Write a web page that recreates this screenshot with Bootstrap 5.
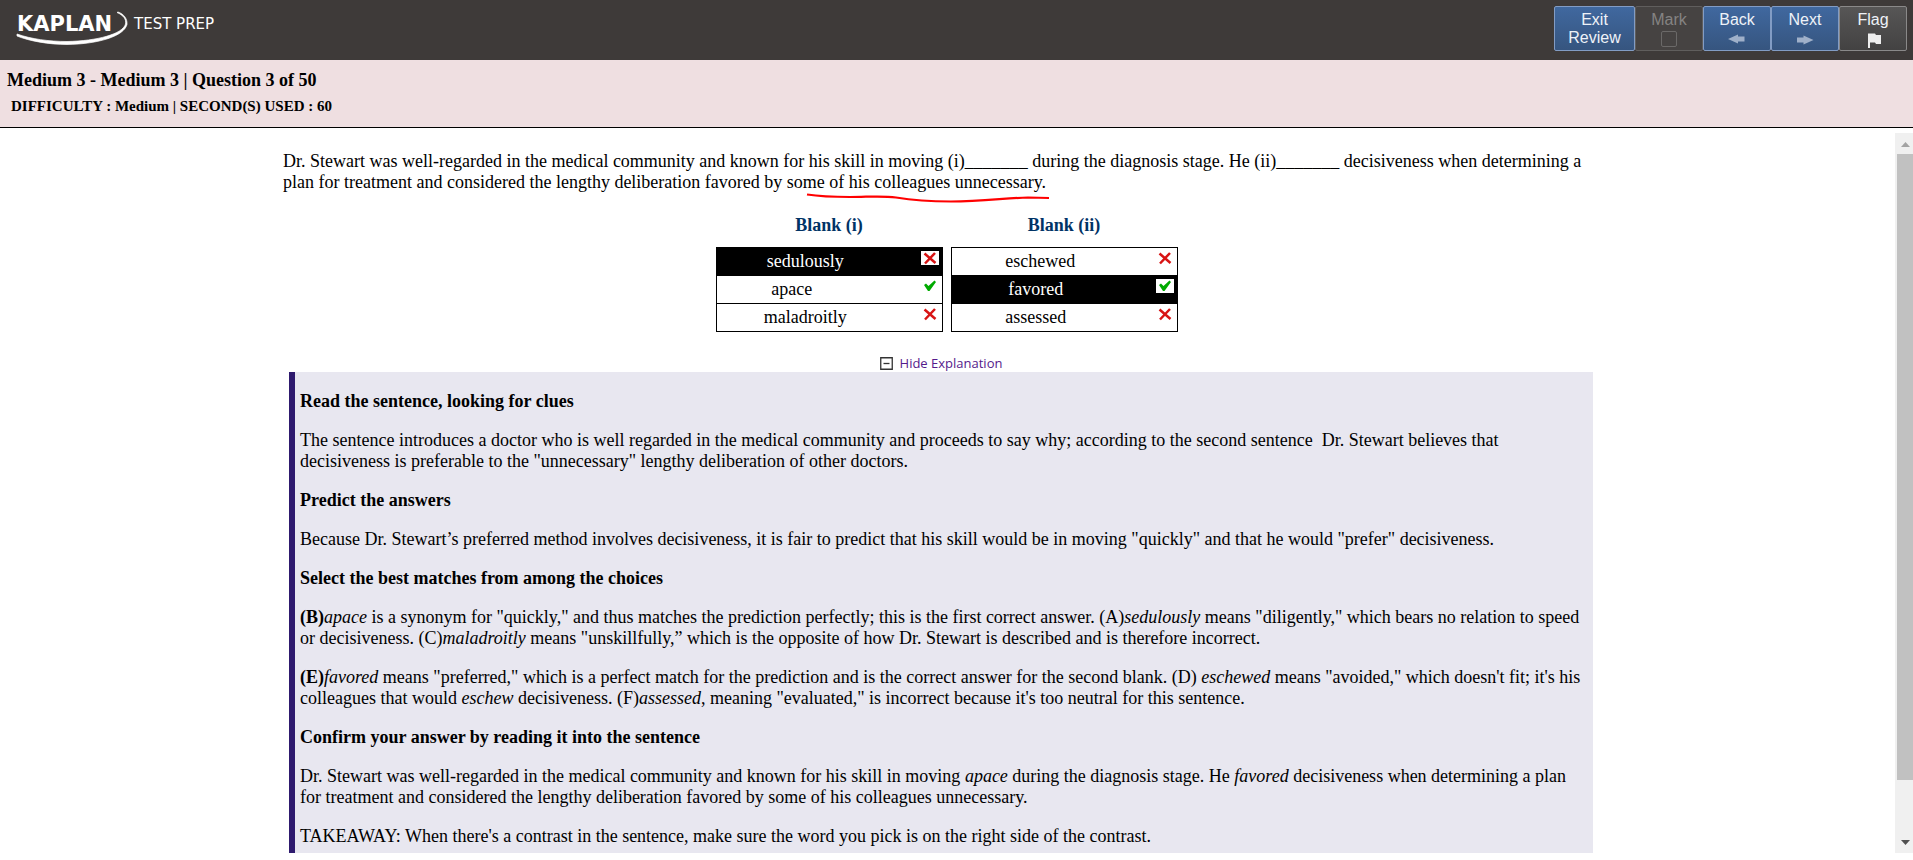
<!DOCTYPE html>
<html lang="en">
<head>
<meta charset="utf-8">
<meta name="viewport" content="width=device-width, initial-scale=1">
<title>Kaplan Test Prep - Review</title>
<link href="https://cdn.jsdelivr.net/npm/bootstrap@5.3.0/dist/css/bootstrap.min.css" rel="stylesheet">
<style>
  body { font-family: "Liberation Serif", "Times New Roman", serif; font-size: 18px; line-height: 21px; color: #000; background: #fff; }
  .top-bar { background: #3e3a39; height: 60px; padding-right: 6px; }
  .brand { margin: 9px 0 0 17px; color: #fff; width: 220px; height: 40px; overflow: visible; }
  .brand text { font-family: "DejaVu Sans", sans-serif; fill: #fff; }
  .tools { margin-top: 6px; }
  .tool { width: 68px; height: 45px; margin: 0; padding: 4px 0 0; border: 1px solid #829cc4; border-radius: 2px; color: #eef2f8; background: linear-gradient(#40689f, #36557f); font-family: "Liberation Sans", Arial, sans-serif; font-size: 16px; line-height: 18px; display: flex; flex-direction: column; align-items: center; }
  .tool svg { display: block; }
  .tool-wide { width: 81px; }
  .tool-grey { background: linear-gradient(#575656, #434242); border-color: #8a8989; }
  .tool:disabled { background: #464342; border-color: #605e5d; color: #858382; }
  .info-bar { background: #efdfe1; border-bottom: 1px solid #000; padding: 10px 7px 11px; }
  .info-bar h1 { font-size: 18px; line-height: 21px; font-weight: 700; margin: 0 0 5px; }
  .info-bar h2 { font-size: 15px; line-height: 20px; font-weight: 700; margin: 0 0 0 4px; }
  .stage { margin: 5px 0 7px; min-height: 0; }
  .pane { overflow-y: auto; scrollbar-width: none; min-width: 0; }
  .pane::-webkit-scrollbar { display: none; }
  .question { max-width: 1329px; margin: 0 auto; padding-top: 18px; }
  .stem { margin: 0 0 22px; }
  .marked-text { position: relative; display: inline-block; }
  .marked-text svg { position: absolute; left: 3px; top: 100%; }
  .blanks { gap: 8px; padding-right: 2px; }
  .choices { width: 227px; border-collapse: collapse; }
  .choices caption { caption-side: top; padding: 0 0 11px; color: #036; font-weight: 700; text-align: center; }
  .choices td { border: 1px solid #000; border-width: 1px 0; padding: 3px 0; height: 28px; text-align: center; }
  .choices td:first-child { border-left-width: 1px; }
  .choices td:last-child { border-right-width: 1px; width: 48px; padding: 3px 3px 0 0; vertical-align: top; }
  .choices td svg { display: block; margin-left: auto; background: #fff; }
  .picked td { background: #000; color: #fff; }
  .explain-wrap { margin: 24px 19px 0 6px; }
  .toggle-link { font-family: "Open Sans", sans-serif; font-size: 13px; line-height: 15px; color: #551a8b; text-decoration: none; gap: 7px; margin-bottom: 1px; }
  .explain { background: #e8e7f0; border-left: 6px solid #2e1a6e; padding: 19px 5px 18px; }
  .explain p, .explain h3 { margin: 0 0 18px; font-size: 18px; line-height: 21px; }
  .explain h3 { font-weight: 700; }
  .bar-rail { width: 18px; background: #f0f0f0; padding-left: 2px; }
  .bar-thumb { background: #c1c1c1; height: 87%; }
</style>
</head>
<body>
<div class="d-flex flex-column vh-100">
  <header class="top-bar d-flex justify-content-between align-items-start flex-shrink-0">
    <svg class="brand" viewBox="0 0 220 40" role="img" aria-label="Kaplan Test Prep">
      <text x="0" y="22" font-size="21" font-weight="700">KAPLAN</text>
      <text x="117" y="20" font-size="15">TEST PREP</text>
      <path d="M101 3C107 5 110.500 10 110 15.500C107 27 82 35 50 35.500C32 35.500 12 32 0 27V25C14 30 32 32.500 50 32.500C80 32 106 25 108.500 15C109.500 10 106 6 100 3.500Z" fill="#fff" stroke="#fff" stroke-width=".7"/>
    </svg>
    <nav class="tools d-flex" aria-label="Review controls">
      <button class="tool tool-wide" type="button"><span>Exit</span><span>Review</span></button>
      <button class="tool" type="button" disabled>Mark
        <svg width="16" height="20" viewBox="0 0 16 20"><rect x=".5" y="2.500" width="15" height="15" rx="1.500" fill="none" stroke="#6b6968"/></svg>
      </button>
      <button class="tool" type="button">Back
        <svg width="18" height="20" viewBox="0 0 18 20"><path d="M0 10L10 5.500V7.500H16.500V12.500H10V14.500Z" fill="#9fb0c9"/></svg>
      </button>
      <button class="tool" type="button">Next
        <svg width="18" height="20" viewBox="0 0 18 20"><path d="M17.500 11L7.500 6.500V8.500H1V13.500H7.500V15.500Z" fill="#9fb0c9"/></svg>
      </button>
      <button class="tool tool-grey" type="button">Flag
        <svg width="16" height="20" viewBox="0 0 16 20"><path d="M3 4.500H10L11 6H16V15H11L10 13.500H5V19H3Z" fill="#eee"/></svg>
      </button>
    </nav>
  </header>
  <section class="info-bar flex-shrink-0">
    <h1>Medium 3 - Medium 3 | Question 3 of 50</h1>
    <h2>DIFFICULTY : Medium | SECOND(S) USED : 60</h2>
  </section>
  <div class="stage d-flex flex-grow-1">
    <main class="pane flex-grow-1">
      <div class="question">
        <p class="stem">Dr. Stewart was well-regarded in the medical community and known for his skill in moving (i)_______ during the diagnosis stage. He (ii)_______ decisiveness when determining a plan for treatment and considered the lengthy deliberation favored by so<span class="marked-text">me of his colleagues unnecessary.<svg width="246" height="12" viewBox="0 0 246 12" fill="none" aria-hidden="true"><path d="M1 1.500C14 3.500 28 4 44 4C62 4 76 2.500 90 4.500C108 7.500 124 8.500 145 8.500C176 8.500 200 5 222 4.500L243 5" stroke="#f00" stroke-width="2.200"/></svg></span></p>
        <div class="blanks d-flex justify-content-center">
          <table class="choices">
            <caption>Blank (i)</caption>
            <tbody>
            <tr class="picked"><td>sedulously</td><td><svg width="18" height="14" viewBox="0 0 18 14" role="img" aria-label="Incorrect"><path d="M3.500 2.500L14.500 12M14 2L4 12.500" stroke="#d81414" stroke-width="2.500"/></svg></td></tr>
            <tr><td>apace&emsp;&ensp;</td><td><svg width="18" height="14" viewBox="0 0 18 14" role="img" aria-label="Correct"><path d="M3 6L5 4.500L7.500 7L13.500 1.500L15 3L8.500 12H7Z" fill="#0a0"/></svg></td></tr>
            <tr><td>maladroitly</td><td><svg width="18" height="14" viewBox="0 0 18 14" role="img" aria-label="Incorrect"><path d="M3.500 2.500L14.500 12M14 2L4 12.500" stroke="#d81414" stroke-width="2.500"/></svg></td></tr>
            </tbody>
          </table>
          <table class="choices">
            <caption>Blank (ii)</caption>
            <tbody>
            <tr><td>eschewed</td><td><svg width="18" height="14" viewBox="0 0 18 14" role="img" aria-label="Incorrect"><path d="M3.500 2.500L14.500 12M14 2L4 12.500" stroke="#d81414" stroke-width="2.500"/></svg></td></tr>
            <tr class="picked"><td>favored&ensp;</td><td><svg width="18" height="14" viewBox="0 0 18 14" role="img" aria-label="Correct"><path d="M3 6L5 4.500L7.500 7L13.500 1.500L15 3L8.500 12H7Z" fill="#0a0"/></svg></td></tr>
            <tr><td>assessed&nbsp;&nbsp;</td><td><svg width="18" height="14" viewBox="0 0 18 14" role="img" aria-label="Incorrect"><path d="M3.500 2.500L14.500 12M14 2L4 12.500" stroke="#d81414" stroke-width="2.500"/></svg></td></tr>
            </tbody>
          </table>
        </div>
        <div class="explain-wrap">
          <div class="d-flex justify-content-center">
            <a class="toggle-link d-flex align-items-center" href="#explanation"><svg width="13" height="13" viewBox="0 0 13 13" aria-hidden="true"><path d="M.75 .75H12.250V12.250H.75Z" fill="#fff" stroke="#333" stroke-width="1.300"/><path d="M3.500 6.500H9.500" stroke="#333" stroke-width="1.300"/></svg>Hide Explanation</a>
          </div>
          <article class="explain" id="explanation">
            <h3>Read the sentence, looking for clues</h3>
            <p>The sentence introduces a doctor who is well regarded in the medical community and proceeds to say why; according to the second sentence&nbsp; Dr. Stewart believes that decisiveness is preferable to the "unnecessary" lengthy deliberation of other doctors.</p>
            <h3>Predict the answers</h3>
            <p>Because Dr. Stewart’s preferred method involves decisiveness, it is fair to predict that his skill would be in moving "quickly" and that he would "prefer" decisiveness.</p>
            <h3>Select the best matches from among the choices</h3>
            <p><b>(B)</b><i>apace</i> is a synonym for "quickly," and thus matches the prediction perfectly; this is the first correct answer. (A)<i>sedulously</i> means "diligently," which bears no relation to speed or decisiveness. (C)<i>maladroitly</i> means "unskillfully,” which is the opposite of how Dr. Stewart is described and is therefore incorrect.</p>
            <p><b>(E)</b><i>favored</i> means "preferred," which is a perfect match for the prediction and is the correct answer for the second blank. (D) <i>eschewed</i> means "avoided," which doesn't fit; it's his colleagues that would <i>eschew</i> decisiveness. (F)<i>assessed</i>, meaning "evaluated," is incorrect because it's too neutral for this sentence.</p>
            <h3>Confirm your answer by reading it into the sentence</h3>
            <p>Dr. Stewart was well-regarded in the medical community and known for his skill in moving <i>apace</i> during the diagnosis stage. He <i>favored</i> decisiveness when determining a plan for treatment and considered the lengthy deliberation favored by some of his colleagues unnecessary.</p>
            <p>TAKEAWAY: When there's a contrast in the sentence, make sure the word you pick is on the right side of the contrast.</p>
          </article>
        </div>
      </div>
    </main>
    <div class="bar-rail d-flex flex-column flex-shrink-0" aria-hidden="true">
      <svg width="16" height="21" viewBox="0 0 16 21"><path d="M4 14L8.500 9L13 14Z" fill="#a3a3a3"/></svg>
      <div class="bar-thumb"></div>
      <svg class="mt-auto" width="16" height="21" viewBox="0 0 16 21"><path d="M4 8L8.500 13L13 8Z" fill="#505050"/></svg>
    </div>
  </div>
</div>
<script src="https://cdn.jsdelivr.net/npm/bootstrap@5.3.0/dist/js/bootstrap.bundle.min.js"></script>
</body>
</html>
